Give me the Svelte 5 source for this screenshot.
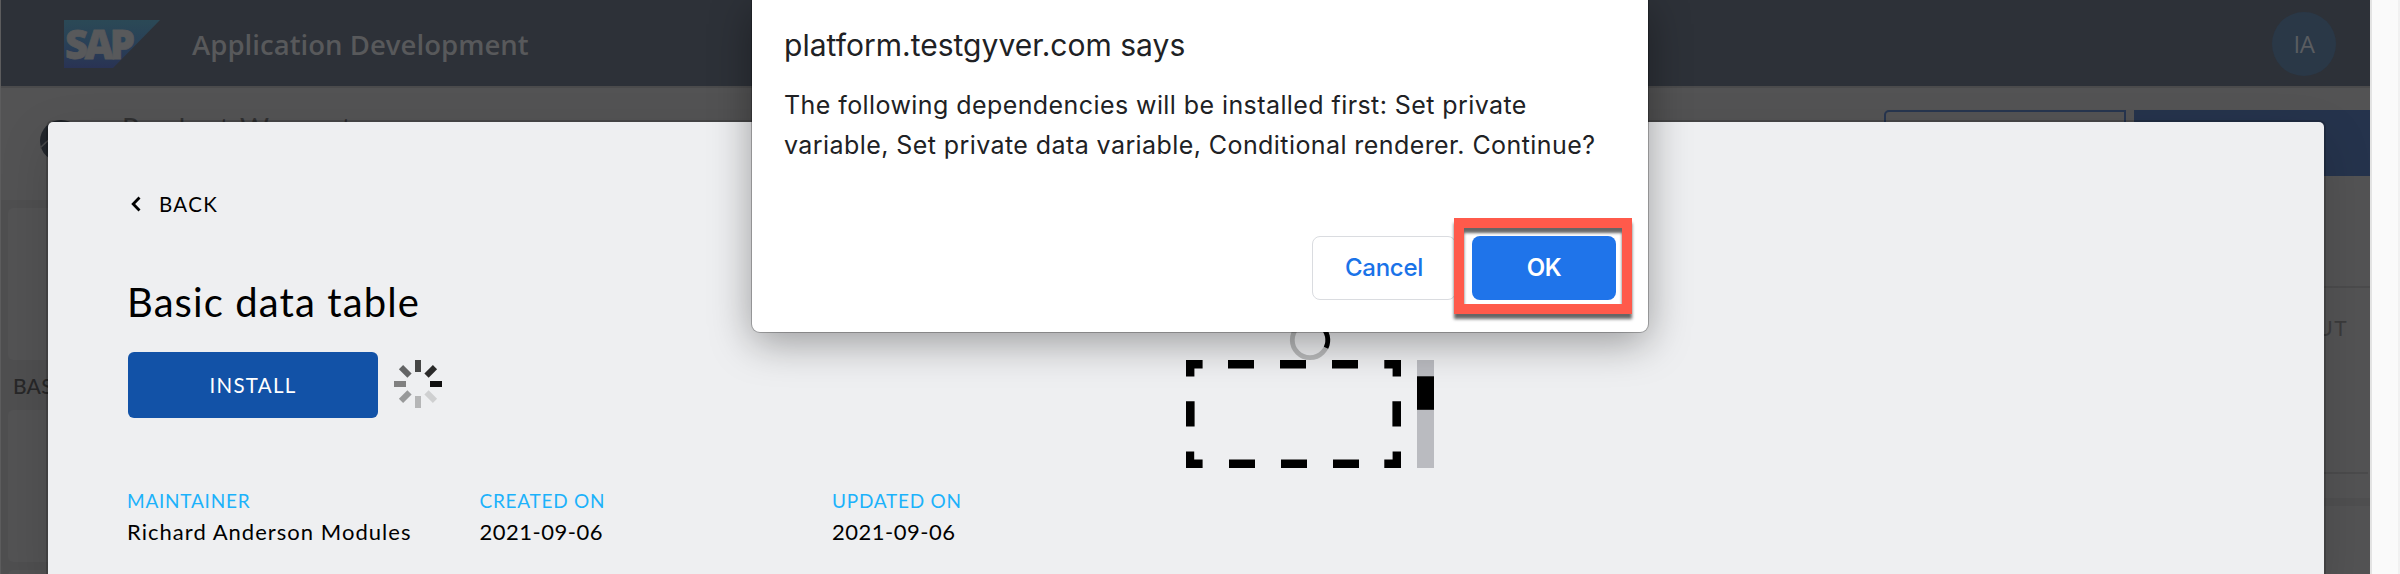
<script>
  const meta = [
    { label: 'MAINTAINER', value: 'Richard Anderson Modules', spacing: 1.03 },
    { label: 'CREATED ON', value: '2021-09-06', spacing: 0.5 },
    { label: 'UPDATED ON', value: '2021-09-06', spacing: 0.5 }
  ];
  const spokes = ['#464746', '#2a2a2a', '#101010', '#cfd0d1', '#b5b6b7', '#98999a', '#808080', '#636465'];
</script>

<div class="screen">
  <div class="page">
    <header>
      <svg class="logo" width="96" height="48" viewBox="0 0 96 48">
        <defs>
          <linearGradient id="brand" x1="0" y1="0" x2="0" y2="1">
            <stop offset="0" stop-color="#2b4956" />
            <stop offset="0.5" stop-color="#294057" />
            <stop offset="1" stop-color="#293354" />
          </linearGradient>
        </defs>
        <path d="M0 0H96L49 48H0Z" fill="url(#brand)" />
        <text x="1" y="38.5" textLength="70" lengthAdjust="spacing">SAP</text>
      </svg>
      <span class="product">Application Development</span>
      <span class="avatar">IA</span>
    </header>
    <div class="toolbar">
      <svg class="globe" width="42" height="42" viewBox="0 0 42 42">
        <circle cx="21" cy="21" r="21" fill="#22262c" />
        <path d="M0 28Q12 16 22 12" fill="none" stroke="#48494b" stroke-width="1.5" />
      </svg>
      <span class="project">Product Warranty</span>
      <span class="outline"></span>
      <span class="solid"></span>
    </div>
    <div class="canvas">
      <div class="left">
        <div class="card"></div>
        <div class="section">BASIC</div>
        <div class="card"></div>
        <div class="card next"></div>
      </div>
      <div class="right">
        <div class="pane"></div>
        <div class="tab">LAYOUT</div>
        <div class="strip"></div>
      </div>
    </div>
  </div>
  <div class="gutter"></div>

  <main class="modal">
    <div class="details">
      <div class="back">
        <svg width="10" height="16" viewBox="0 0 10 16"><path d="M8.5 1.5L2.2 8L8.5 14.5" fill="none" stroke="#000" stroke-width="2.8" /></svg>
        <span>BACK</span>
      </div>
      <h1>Basic data table</h1>
      <div class="actions">
        <button class="install">INSTALL</button>
        <svg width="48" height="48" viewBox="-24 -24 48 48">
          {#each spokes as fill, i}
            <rect x="-3" y="-24" width="6" height="12" {fill} transform="rotate({i * 45})" />
          {/each}
        </svg>
      </div>
      <div class="meta">
        {#each meta as m}
          <div class="item">
            <span class="label">{m.label}</span>
            <span class="value" style="letter-spacing:{m.spacing}px">{m.value}</span>
          </div>
        {/each}
      </div>
    </div>
    <svg class="figure" width="248" height="148" viewBox="0 0 248 148">
      <circle cx="124" cy="20" r="17.7" fill="none" stroke="#b9babb" stroke-width="4.8" />
      <path d="M135 6.1A17.7 17.7 0 0 1 140 27.8" fill="none" stroke="#000" stroke-width="4.8" />
      <path d="M0 40h16.6v8.5H8.4v8H0zM42 40h26v8.5H42zM94 40h26v8.5H94zM146 40h26v8.5h-26zM198.3 40H215v16.6h-8.4v-8.1h-8.3zM0 81.2h8.6v25.4H0zM206.4 81.2h8.6v25.4h-8.6zM0 131.4h8.2v8.1h8.4v8.5H0zM43 139.5h26v8.5H43zM95 139.5h26v8.5H95zM147 139.5h26v8.5h-26zM198.3 139.5h8.3v-8.1h8.4V148h-16.7z" />
      <rect x="231" y="40" width="17" height="108" fill="#babbc0" />
      <rect x="231" y="56.3" width="17" height="33.5" />
    </svg>
  </main>

  <section class="dialog">
    <h2>platform.testgyver.com says</h2>
    <p>The following dependencies will be installed first: Set private<br />variable, Set private data variable, Conditional renderer. Continue?</p>
    <div class="buttons">
      <button class="cancel">Cancel</button>
      <button class="ok">OK<span class="marker"></span></button>
    </div>
  </section>
</div>

<style>
  :global(body) { background: #fafafa; }
  .screen { position: relative; display: flex; width: 2400px; height: 574px; overflow: hidden; }
  .page { width: 2370px; height: 574px; flex: none; box-sizing: border-box; background: #535354; border-left: 1px solid #5c5c5d; overflow: hidden; }
  .gutter { box-sizing: border-box; width: 30px; background: #fafafa; border-left: 2px solid #e3e3e3; border-right: 2px solid #f1f1f1; position: relative; z-index: 2; }
  header { box-sizing: border-box; height: 88px; display: flex; align-items: center; padding: 0 34px 0 63px; background: #2d3138; border-bottom: 2px solid #4b4b4c; }
  .logo { margin-top: 2px; overflow: visible; }
  .logo text { font: 900 40px "Noto Sans", sans-serif; fill: #58595b; stroke: #58595b; stroke-width: .8px; }
  .product { margin: 3px 0 0 32px; font: 600 27.5px/40px "Open Sans", sans-serif; letter-spacing: .04px; color: #58595b; }
  .avatar { width: 64px; height: 64px; margin: 2px 0 0 auto; border-radius: 50%; background: #2a3847; color: #5a5d61; font: 400 24px/64px "Open Sans", sans-serif; letter-spacing: -.5px; text-align: center; }
  .toolbar { box-sizing: border-box; height: 112px; display: flex; align-items: flex-start; padding: 22px 0 0 39px; }
  .globe { margin-top: 10px; flex: none; }
  .project { margin: 1px 0 0 40px; width: 1762px; font: 28px/34px Lato, sans-serif; letter-spacing: 1.8px; color: #303031; }
  .outline { box-sizing: border-box; width: 242px; height: 66px; border: 2px solid #26354f; border-radius: 5px 0 0 5px; }
  .solid { width: 236px; height: 66px; margin-left: 8px; background: #25334c; }
  .canvas { height: 374px; display: flex; justify-content: space-between; background: #535354; }
  .left { width: 200px; background: #4f4f50; padding: 8px 0 0 7px; }
  .card { height: 152px; background: #535354; border-radius: 5px 0 0 5px; }
  .section { height: 50px; padding-left: 5px; font: 500 21px/52px Lato, sans-serif; letter-spacing: .2px; color: #272728; }
  .next { margin-top: 8px; }
  .right { width: 300px; }
  .pane { height: 86px; border-bottom: 2px solid #4b4b4c; }
  .tab { box-sizing: border-box; height: 186px; margin-right: 2px; padding: 26px 20px 0 0; text-align: right; font: 21px/28px Lato, sans-serif; letter-spacing: 1.4px; color: #3b3b3c; border-bottom: 2px solid #4b4b4c; }
  .strip { height: 8px; margin-top: 24px; background: #4f4f50; }

  .modal { position: absolute; left: 48px; top: 122px; width: 2276px; height: 460px; display: grid; grid-template-columns: 1138px 1fr; background: #eeeff1; border-radius: 5px; box-shadow: 0 0 0 2px rgba(0,0,0,.16), 0 18px 50px rgba(0,0,0,.15); font-family: Lato, sans-serif; color: #000; }
  .details { padding: 70px 0 0 79px; }
  .back { display: flex; align-items: center; gap: 18px; padding-left: 4px; height: 24px; font-size: 20.5px; line-height: 24px; letter-spacing: 1.3px; }
  h1 { margin: 61px 0 0; font-weight: 400; font-size: 40px; line-height: 50px; letter-spacing: 1.1px; }
  .actions { display: flex; align-items: center; gap: 16px; margin: 25px 0 0 1px; height: 66px; }
  .actions svg { margin-top: -2px; }
  .install { width: 250px; height: 66px; padding: 0; border: 0; border-radius: 6px; background: #1252a7; color: #fff; font: 20.5px/62px Lato, sans-serif; letter-spacing: 1.3px; }
  .meta { display: grid; grid-template-columns: repeat(3, 352.5px); margin-top: 71px; }
  .item { display: flex; flex-direction: column; gap: 4px; }
  .label { font-size: 19px; line-height: 24px; letter-spacing: .75px; color: #1cb2fb; }
  .value { font-size: 22px; line-height: 29px; }
  .figure { margin-top: 198px; }

  .dialog { position: absolute; left: 752px; top: 0; width: 896px; height: 332px; box-sizing: border-box; padding: 27px 32px 32px 32px; background: #fff; border-radius: 0 0 8px 8px; box-shadow: 0 0 0 1px rgba(0,0,0,.25), 0 10px 42px rgba(0,0,0,.36); font-family: Inter, sans-serif; color: #202124; }
  h2 { margin: 0; font-weight: 400; font-size: 30px; line-height: 36px; letter-spacing: .02px; }
  p { margin: 22px 0 0; font-size: 25px; line-height: 40px; letter-spacing: .42px; white-space: nowrap; }
  .buttons { display: flex; justify-content: flex-end; gap: 16px; margin-top: 71px; }
  .buttons button { position: relative; box-sizing: border-box; width: 144px; height: 64px; padding: 0; border: 1px solid #dadce0; border-radius: 8px; background: #fff; color: #1a73e8; font: 500 24px/60px Inter, sans-serif; letter-spacing: -.3px; }
  .buttons .ok { border: 0; background: #1f74ea; color: #fff; font-weight: 600; }
  .marker { position: absolute; left: -18px; top: -18px; box-sizing: border-box; width: 178px; height: 96px; border: 10px solid #ff5a4b; box-shadow: 0 5px 3px rgba(0,0,0,.6), inset 0 5px 3px rgba(0,0,0,.6); }
</style>
